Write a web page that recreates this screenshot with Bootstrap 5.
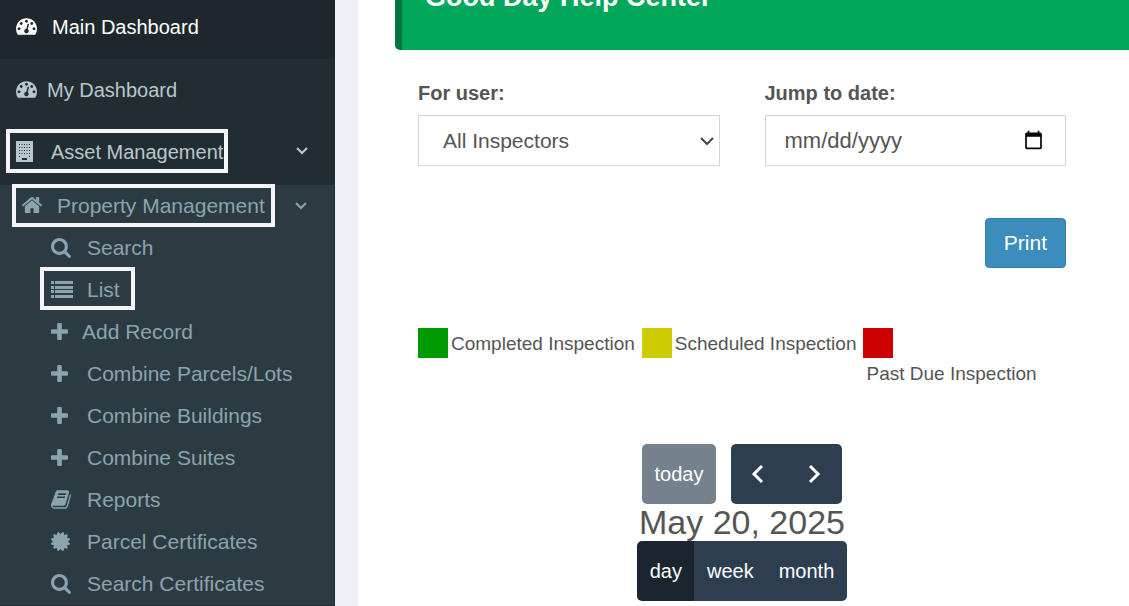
<!DOCTYPE html>
<html lang="en">
<head>
<meta charset="utf-8">
<meta name="viewport" content="width=device-width, initial-scale=1">
<title>Main Dashboard</title>
<link href="https://cdn.jsdelivr.net/npm/bootstrap@5.3.0/dist/css/bootstrap.min.css" rel="stylesheet">
<style>
  body { font-family: "Liberation Sans", Arial, sans-serif; font-size: 20px; line-height: 30px; color: #555; background: #ecf0f5; }
  a { text-decoration: none; }
  svg { display: block; fill: currentColor; flex: none; }

  .side-menu { width: 335px; background: #222d32; }
  .top-link { height: 63px; padding: 0 0 2px 16px; color: #b8c7ce; }
  .top-link.current { height: 59px; padding-bottom: 6px; background: #1e282c; color: #fff; }
  .sub-menu { background: #2c3b41; margin-right: 1px; font-size: 21px; }
  .sub-link { height: 42px; padding-left: 51px; color: #8aa4af; }
  .sub-link.framed-link { padding: 0 0 3px 40px; }
  .sub-link.parent-link { padding: 0 0 1px 12px; }
  .top-link.framed-link { padding: 0 0 5px 6px; }
  .icon-slot { width: 36px; padding-bottom: 1px; flex: none; }
  .icon-slot-near { width: 31px; }
  .icon-slot-frame { width: 35px; }
  .frame { height: 44px; padding: 2px 1px 0 6px; border: 4px solid #f5f5f5; }
  .sub-link .frame { height: 43px; padding: 2px 11px 0 7px; }
  .parent-link .frame { padding: 0 6px; }
  .caret { margin-left: auto; margin-right: 26px; fill: none; stroke: currentColor; stroke-width: 2; }

  .content { margin-left: 23px; padding-left: 37px; background: #fff; min-width: 0; }
  .notice { height: 50px; padding-left: 23px; background: #00a65a; border-left: 7px solid #00733e; border-radius: 0 0 0 5px; color: #fff; overflow: hidden; }
  .notice h1 { margin: -18px 0 0; font-size: 27px; line-height: 30px; font-weight: 700; }
  .panel-body { padding: 28px 63px 5px 23px; }
  .fields { column-gap: 45px; }
  .field { flex: 1 1 0; min-width: 0; }
  .field label { font-weight: 700; margin-bottom: 7px; display: block; }
  .field .form-select, .field .form-control { height: 51px; border: 1px solid #d2d6de; border-radius: 0; font-size: 21px; color: #555; }
  .field .form-select { padding: 0 40px 0 24px; background-image: url("data:image/svg+xml,%3Csvg xmlns='http://www.w3.org/2000/svg' viewBox='0 0 14 10'%3E%3Cpath d='M1 2l6 6 6-6' fill='none' stroke='%23444' stroke-width='2'/%3E%3C/svg%3E"); background-size: 14px 10px; background-position: right 5px center; }
  .field .form-control { padding: 0 21px 0 19px; font-size: 22px; }
  .field ::-webkit-calendar-picker-indicator { width: 21px; height: 21px; padding: 0; }
  .btn-print { --bs-btn-bg: #3c8dbc; --bs-btn-color: #fff; --bs-btn-border-color: #367fa9; --bs-btn-hover-bg: #367fa9; --bs-btn-hover-color: #fff; height: 50px; padding: 0 18px; border-radius: 4px; font-size: 21px; }
  .actions { margin-top: 52px; }
  .legend-row { margin-top: 60px; gap: 7px; white-space: nowrap; font-size: 19px; }
  .swatch { width: 30px; height: 30px; flex: none; }
  .done { background: #090; } .planned { background: #cc0; } .overdue { background: #c00; }
  .legend-text { padding: 1px 0 0 3px; }
  .calendar-bar { margin-top: 55px; }
  .calendar-row { gap: 15px; }
  .btn-cal { --bs-btn-bg: #2c3e50; --bs-btn-color: #fff; --bs-btn-hover-bg: #1e2b37; --bs-btn-hover-color: #fff; --bs-btn-disabled-bg: #2c3e50; --bs-btn-disabled-color: #fff; height: 60px; padding: 0 13px; border: 0; border-radius: 5px; font-size: 20px; }
  .btn-cal.picked { background: #1a252f; }
  .btn-step { padding: 0 20px; }
  .btn-cal svg { fill: none; stroke: currentColor; stroke-width: 3; }
  .day-title { font-size: 34px; line-height: 37px; margin: 0; font-weight: 400; }
</style>
</head>
<body>
<svg class="d-none" aria-hidden="true">
  <symbol id="gauge" viewBox="0 128 1792 1408"><path d="M384 1152q0-53-37.500-90.500t-90.500-37.500-90.500 37.500-37.500 90.500 37.500 90.500 90.500 37.500 90.500-37.500 37.500-90.500zm192-448q0-53-37.500-90.500t-90.500-37.500-90.500 37.500-37.500 90.500 37.500 90.500 90.500 37.500 90.500-37.500 37.500-90.500zm428 481l101-382q6-26-7.500-48.500t-38.500-29.500-48 6.500-30 39.500l-101 382q-60 5-107 43.500t-63 98.500q-20 77 20 146t117 89 146-20 89-117q16-60-6-117t-72-91zm660-33q0-53-37.500-90.500t-90.500-37.500-90.500 37.500-37.500 90.500 37.500 90.500 90.500 37.500 90.500-37.500 37.500-90.500zm-640-640q0-53-37.500-90.500t-90.500-37.500-90.500 37.500-37.500 90.500 37.500 90.500 90.500 37.500 90.500-37.500 37.500-90.500zm448 192q0-53-37.500-90.500t-90.500-37.500-90.500 37.500-37.500 90.500 37.500 90.500 90.500 37.500 90.500-37.500 37.500-90.500zm320 448q0 261-141 483-19 29-54 29h-1402q-35 0-54-29-141-221-141-483 0-182 71-348t191-286 286-191 348-71 348 71 286 191 191 286 71 348z" transform="translate(0 -128)"/></symbol>
  <symbol id="building" viewBox="0 0 17 21"><path fill-rule="evenodd" d="M0 0h17v21H0zM3 3v1h1V3zm2.500 0v1h1V3zM8 3v1h1V3zm2.500 0v1h1V3zM13 3v1h1V3zM3 6v1h1V6zm2.500 0v1h1V6zM8 6v1h1V6zm2.500 0v1h1V6zM13 6v1h1V6zM3 9v1h1V9zm2.500 0v1h1V9zM8 9v1h1V9zm2.500 0v1h1V9zM13 9v1h1V9zM3 12v1h1v-1zm2.500 0v1h1v-1zM8 12v1h1v-1zm2.500 0v1h1v-1zM13 12v1h1v-1zM3 15v1h1v-1zM13 15v1h1v-1zM6 17v2h5v-2z"/></symbol>
  <symbol id="home" viewBox="89 253 1612 1283"><path d="M1472 992v480q0 26-19 45t-45 19h-384v-384h-256v384h-384q-26 0-45-19t-19-45v-480q0-1 .5-3t.5-3l575-474 575 474q1 2 1 6zm223-69l-62 74q-8 9-21 11h-3q-13 0-21-7l-692-577-692 577q-12 8-24 7-13-2-21-11l-62-74q-8-10-7-23.500t11-21.500l719-599q32-26 76-26t76 26l244 204v-195q0-14 9-23t23-9h192q14 0 23 9t9 23v408l219 182q10 8 11 21.500t-7 23.500z"/></symbol>
  <symbol id="search" viewBox="64 128 1664 1664"><path d="M1216 832q0-185-131.500-316.500t-316.500-131.500-316.500 131.500-131.500 316.500 131.500 316.500 316.500 131.500 316.500-131.500 131.500-316.500zm512 832q0 52-38 90t-90 38q-54 0-90-38l-343-342q-179 124-399 124-143 0-273.500-55.500t-225-150-150-225-55.500-273.500 55.500-273.500 150-225 225-150 273.500-55.500 273.500 55.500 225 150 150 225 55.500 273.500q0 220-124 399l343 343q37 37 37 90z"/></symbol>
  <symbol id="list" viewBox="0 0 22 17"><path d="M0 0h3v3H0zM4 0h18v3H4zM0 5h3v3H0zM4 5h18v3H4zM0 9h3v3H0zM4 9h18v3H4zM0 14h3v3H0zM4 14h18v3H4z"/></symbol>
  <symbol id="plus" viewBox="192 128 1408 1408"><path d="M1600 736v192q0 40-28 68t-68 28h-416v416q0 40-28 68t-68 28h-192q-40 0-68-28t-28-68v-416h-416q-40 0-68-28t-28-68v-192q0-40 28-68t68-28h416v-416q0-40 28-68t68-28h192q40 0 68 28t28 68v416h416q40 0 68 28t28 68z"/></symbol>
  <symbol id="book" viewBox="64 128 1664 1536"><path d="M1703 478q40 57 18 129l-275 906q-19 64-76.500 107.500t-122.500 43.500h-923q-77 0-148.500-53.500t-99.500-131.500q-24-67-2-127 0-4 3-27t4-37q1-8-3-21.500t-3-19.500q2-11 8-21t16.500-23.500 16.500-23.500q23-38 45-91.500t30-91.500q3-10 .5-30t-.5-28q3-11 17-28t17-23q21-36 42-92t25-90q1-9-2.500-32t.5-28q4-13 22-30.500t22-22.500q19-26 42.500-84.500t27.500-96.500q1-8-3-25.500t-2-26.500q2-8 9-18t18-23 17-21q8-12 16.500-30.500t15-35 16-36 19.500-32 26.500-23.500 36-11.500 47.500 5.500l-1 3q38-9 51-9h761q74 0 114 56t18 130l-274 906q-36 119-71.500 153.500t-128.500 34.500h-869q-27 0-38 15-11 16-1 43 24 70 144 70h923q29 0 56-15.500t35-41.500l300-987q7-22 5-57 38 15 59 43zm-1064 2q-4 13 2 22.500t20 9.500h608q13 0 25.500-9.500t16.500-22.500l21-64q4-13-2-22.500t-20-9.500h-608q-13 0-25.500 9.500t-16.500 22.500zm-83 256q-4 13 2 22.500t20 9.500h608q13 0 25.500-9.500t16.500-22.500l21-64q4-13-2-22.500t-20-9.500h-608q-13 0-25.500 9.500t-16.500 22.500z"/></symbol>
  <symbol id="seal" viewBox="128 128 1536 1536"><path d="M1504 896l138 135q30 28 20 70-12 41-52 51l-188 48 53 186q12 41-19 70-29 31-70 19l-186-53-48 188q-10 40-51 52-12 2-19 2-31 0-51-22l-135-138-135 138q-28 30-70 20-41-11-51-52l-48-188-186 53q-41 12-70-19-31-29-19-70l53-186-188-48q-40-10-52-51-10-42 20-70l138-135-138-135q-30-28-20-70 12-41 52-51l188-48-53-186q-12-41 19-70 29-31 70-19l186 53 48-188q10-41 51-51 41-12 70 19l135 139 135-139q29-30 70-19 41 10 51 51l48 188 186-53q41-12 70 19 31 29 19 70l-53 186 188 48q40 10 52 51 10 42-20 70z"/></symbol>
</svg>

<div class="d-flex min-vh-100">
  <nav class="side-menu flex-shrink-0" aria-label="Main menu">
    <a href="#" class="top-link current d-flex align-items-center"><span class="icon-slot"><svg width="21" height="17"><use href="#gauge"/></svg></span>Main Dashboard</a>
    <a href="#" class="top-link d-flex align-items-center"><span class="icon-slot icon-slot-near"><svg width="21" height="17"><use href="#gauge"/></svg></span>My Dashboard</a>
    <a href="#" class="top-link framed-link d-flex align-items-center">
      <span class="frame d-flex align-items-center"><span class="icon-slot icon-slot-frame"><svg width="17" height="21"><use href="#building"/></svg></span>Asset Management</span>
      <svg class="caret" width="14" height="10" viewBox="0 0 14 10"><path d="M2 2l5 5 5-5"/></svg>
    </a>
    <div class="sub-menu">
      <a href="#" class="sub-link parent-link d-flex align-items-center">
        <span class="frame d-flex align-items-center"><span class="icon-slot icon-slot-frame"><svg width="20" height="16"><use href="#home"/></svg></span>Property Management</span>
        <svg class="caret" width="14" height="10" viewBox="0 0 14 10"><path d="M2 2l5 5 5-5"/></svg>
      </a>
      <a href="#" class="sub-link d-flex align-items-center"><span class="icon-slot"><svg width="20" height="20"><use href="#search"/></svg></span>Search</a>
      <a href="#" class="sub-link framed-link d-flex align-items-center"><span class="frame d-flex align-items-center"><span class="icon-slot"><svg width="22" height="17"><use href="#list"/></svg></span>List</span></a>
      <a href="#" class="sub-link d-flex align-items-center"><span class="icon-slot icon-slot-near"><svg width="17" height="17"><use href="#plus"/></svg></span>Add Record</a>
      <a href="#" class="sub-link d-flex align-items-center"><span class="icon-slot"><svg width="17" height="17"><use href="#plus"/></svg></span>Combine Parcels/Lots</a>
      <a href="#" class="sub-link d-flex align-items-center"><span class="icon-slot"><svg width="17" height="17"><use href="#plus"/></svg></span>Combine Buildings</a>
      <a href="#" class="sub-link d-flex align-items-center"><span class="icon-slot"><svg width="17" height="17"><use href="#plus"/></svg></span>Combine Suites</a>
      <a href="#" class="sub-link d-flex align-items-center"><span class="icon-slot"><svg width="20" height="19"><use href="#book"/></svg></span>Reports</a>
      <a href="#" class="sub-link d-flex align-items-center"><span class="icon-slot"><svg width="19" height="19"><use href="#seal"/></svg></span>Parcel Certificates</a>
      <a href="#" class="sub-link d-flex align-items-center"><span class="icon-slot"><svg width="20" height="20"><use href="#search"/></svg></span>Search Certificates</a>
    </div>
  </nav>

  <main class="content flex-grow-1">
    <div class="notice"><h1>Good Day Help Center</h1></div>
    <div class="panel-body">
      <form class="fields d-flex">
        <div class="field">
          <label for="inspector">For user:</label>
          <select id="inspector" class="form-select"><option>All Inspectors</option></select>
        </div>
        <div class="field">
          <label for="jump">Jump to date:</label>
          <input id="jump" type="date" class="form-control">
        </div>
      </form>
      <div class="actions d-flex justify-content-end"><button type="button" class="btn btn-print">Print</button></div>
      <div class="legend-row d-flex">
        <div class="d-flex"><span class="swatch done"></span><span class="legend-text">Completed Inspection</span></div>
        <div class="d-flex"><span class="swatch planned"></span><span class="legend-text">Scheduled Inspection</span></div>
        <div class="d-flex flex-column"><span class="swatch overdue"></span><span class="legend-text">Past Due Inspection</span></div>
      </div>
      <div class="calendar-bar d-flex flex-column align-items-center">
        <div class="calendar-row d-flex">
          <button type="button" class="btn btn-cal" disabled>today</button>
          <div class="btn-group">
            <button type="button" class="btn btn-cal btn-step" aria-label="Previous"><svg width="16" height="20" viewBox="0 0 16 20"><path d="M11 2l-8 8 8 8"/></svg></button>
            <button type="button" class="btn btn-cal btn-step" aria-label="Next"><svg width="16" height="20" viewBox="0 0 16 20"><path d="M4 2l8 8-8 8"/></svg></button>
          </div>
        </div>
        <h2 class="day-title">May 20, 2025</h2>
        <div class="btn-group">
          <button type="button" class="btn btn-cal picked">day</button>
          <button type="button" class="btn btn-cal">week</button>
          <button type="button" class="btn btn-cal">month</button>
        </div>
      </div>
    </div>
  </main>
</div>
<script src="https://cdn.jsdelivr.net/npm/bootstrap@5.3.0/dist/js/bootstrap.bundle.min.js"></script>
</body>
</html>
